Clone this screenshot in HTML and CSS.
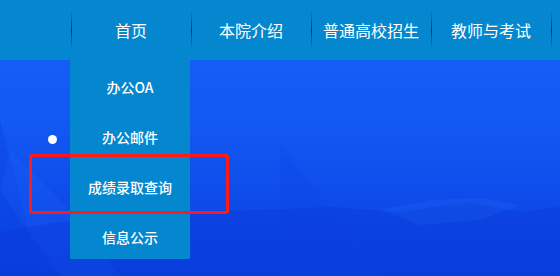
FILE: index.html
```html
<!DOCTYPE html>
<html lang="zh-CN">
<head>
    <meta charset="UTF-8">
    <meta name="viewport" content="width=device-width, initial-scale=1.0">
    <title>导航</title>
    <link rel="stylesheet" href="styles.css">
</head>
<body>
    <div class="page">
        <nav class="nav">
            <div class="nav-item active">
                <a href="#">首页</a>
                <div class="dropdown">
                    <a href="#">办公OA</a>
                    <a href="#">办公邮件</a>
                    <a href="#">成绩录取查询</a>
                    <a href="#">信息公示</a>
                </div>
            </div>
            <div class="nav-item"><a href="#">本院介绍</a></div>
            <div class="nav-item"><a href="#">普通高校招生</a></div>
            <div class="nav-item"><a href="#">教师与考试</a></div>
            <div class="nav-item nav-end"></div>
        </nav>

        <div class="banner">
            <svg class="scenery" width="560" height="216" viewBox="0 0 560 216">
                <polygon points="0,60 0,216 40,216" fill="#0a3fe0" opacity="0.3"/>
                <polygon points="10,90 70,150 120,216 60,216 0,130" fill="#2a72ff" opacity="0.15"/>
                <polygon points="280,85 330,150 385,216 280,216" fill="#0b45e8" opacity="0.25"/>
                <polygon points="0,172 60,162 120,160 180,152 260,150 330,147 400,152 470,142 520,152 560,147 560,216 0,216" fill="#0a3ad8" opacity="0.4"/>
                <polygon points="380,150 430,140 480,138 520,145 480,160 420,165" fill="#2a6cf5" opacity="0.2"/>
            </svg>
            <span class="dot"></span>
        </div>

        <div class="highlight"></div>
    </div>
</body>
</html>
```

FILE: styles.css
```css
* {
    margin: 0;
    padding: 0;
    box-sizing: border-box;
}

body {
    width: 560px;
    height: 276px;
    overflow: hidden;
    font-family: "Noto Sans CJK SC", "Noto Sans", sans-serif;
}

.page {
    position: relative;
    width: 560px;
    height: 276px;
    overflow: hidden;
    background: linear-gradient(180deg, #1762f7 0%, #1258f2 45%, #0a3fe2 100%);
}

a {
    color: #fff;
    text-decoration: none;
}

.nav {
    position: relative;
    z-index: 2;
    display: flex;
    height: 60px;
    padding-left: 70px;
    background: #0587cf;
}

.nav-item {
    position: relative;
    flex: 0 0 120px;
    height: 60px;
    text-align: center;
}

.nav-item.nav-end {
    flex-basis: 10px;
}

.nav-item::before {
    content: "";
    position: absolute;
    left: 1px;
    top: 10px;
    width: 1px;
    height: 40px;
    background: linear-gradient(180deg, rgba(8, 50, 100, 0) 0%, #08386e 50%, rgba(8, 50, 100, 0) 100%);
}

.nav-item > a {
    display: block;
    line-height: 60px;
    font-size: 16px;
    padding-left: 2px;
}

.dropdown {
    position: absolute;
    top: 60px;
    left: 0;
    width: 120px;
    padding-top: 2px;
    background: #0587cf;
}

.dropdown a {
    display: block;
    height: 50px;
    line-height: 50px;
    font-size: 14px;
    font-weight: 500;
}

.dropdown a:last-child {
    height: 47px;
}

.banner {
    position: relative;
    height: 216px;
}

.scenery {
    display: block;
}

.dot {
    position: absolute;
    left: 48px;
    top: 75px;
    width: 9px;
    height: 9px;
    border-radius: 50%;
    background: #fff;
}

.highlight {
    position: absolute;
    z-index: 3;
    left: 29px;
    top: 154px;
    width: 200px;
    height: 60px;
    border: 3px solid #ff1a1a;
    border-radius: 3px;
}
```
